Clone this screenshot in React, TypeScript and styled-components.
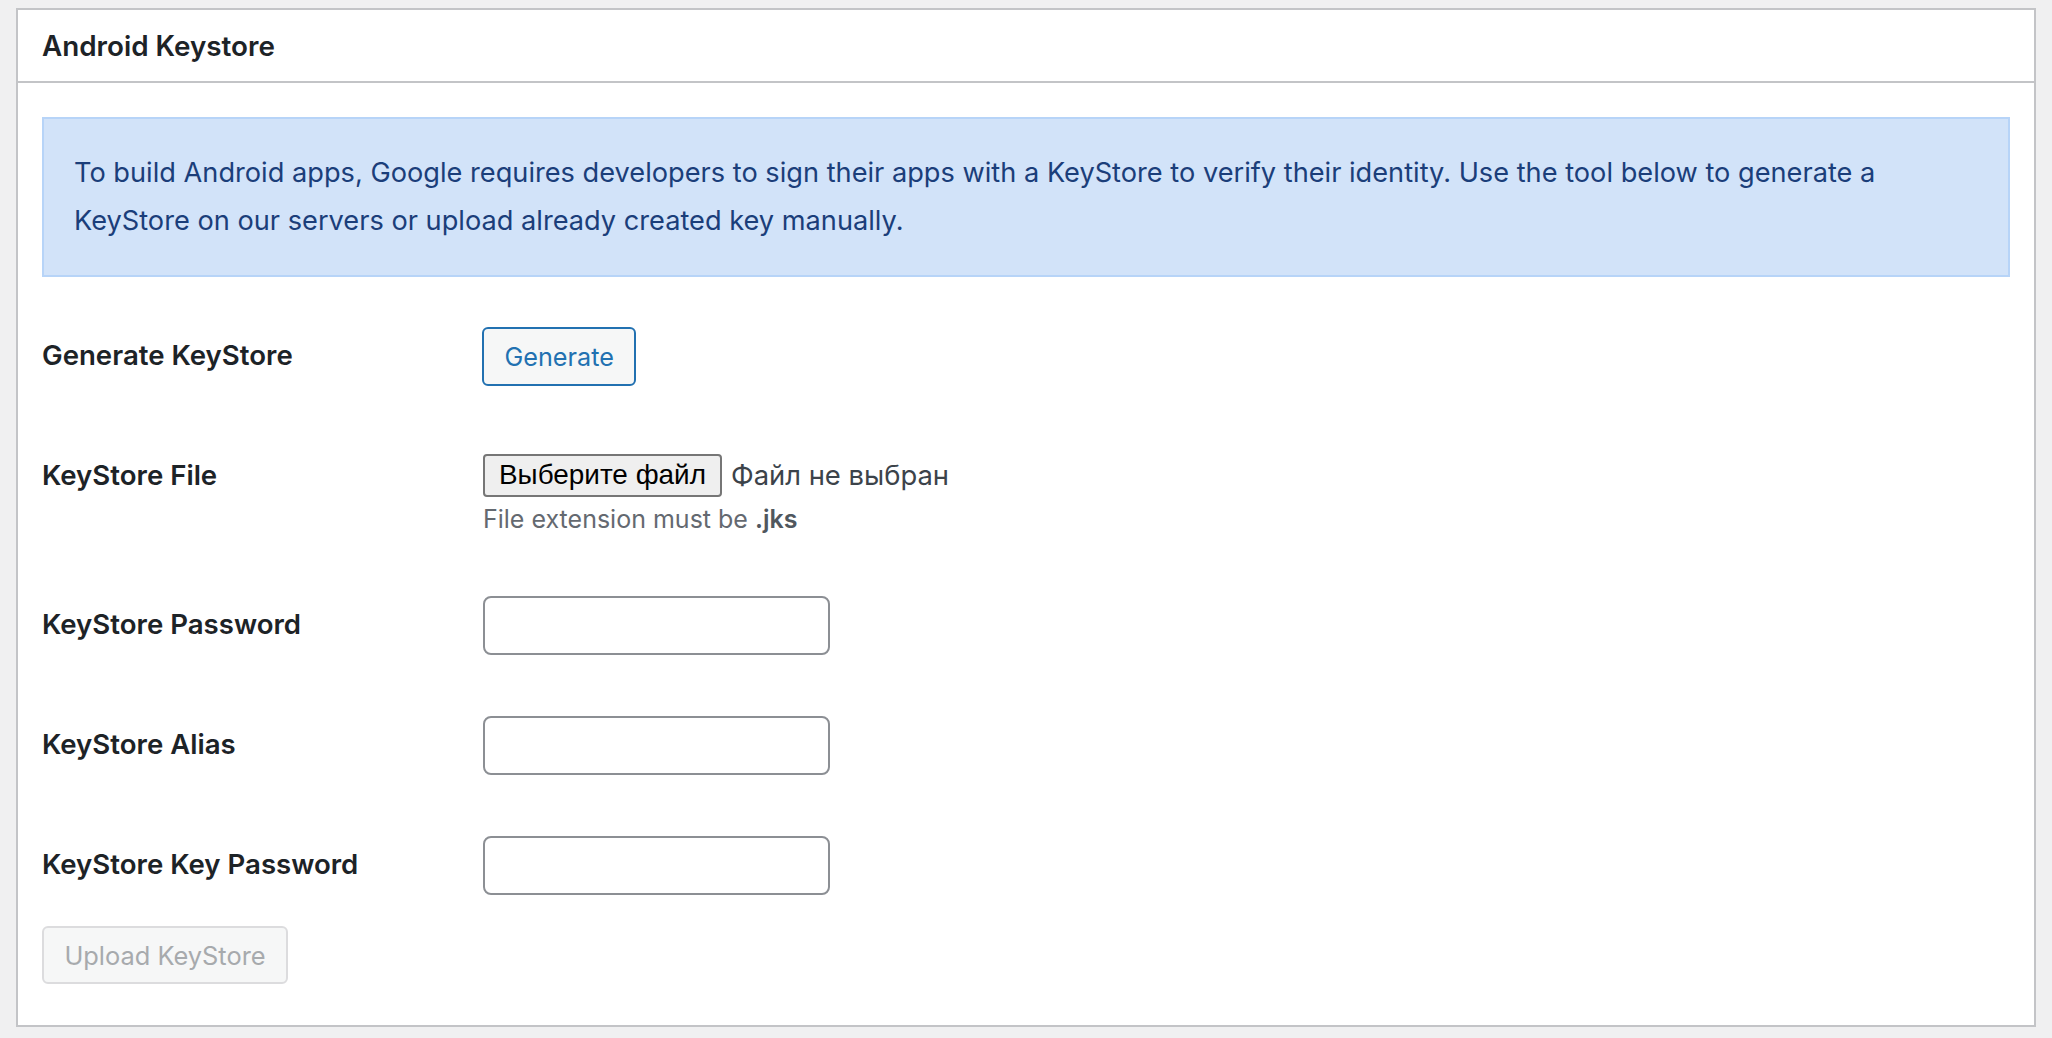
import React from "react";
import styled, { createGlobalStyle } from "styled-components";

const GlobalStyle = createGlobalStyle`
  * { box-sizing: border-box; }
  body {
    margin: 0;
    background: #f0f0f1;
    font-family: Inter, "Noto Sans", sans-serif;
    color: #1d2327;
  }
`;

const Page = styled.div`
  padding: 8px 16px 0 16px;
`;

const Panel = styled.section`
  background: #fff;
  border: 2px solid #c3c4c7;
`;

const PanelHeader = styled.div`
  height: 73px;
  border-bottom: 2px solid #c3c4c7;
  padding: 2px 24px 0;
  display: flex;
  align-items: center;
`;

const PanelTitle = styled.h2`
  margin: 0;
  font-size: 27.8px;
  font-weight: 600;
  line-height: 1;
  color: #1d2327;
`;

const PanelBody = styled.div`
  padding: 34px 24px 41px;
`;

const Notice = styled.div`
  background: #d2e3f9;
  border: 2px solid #b7d4f8;
  padding: 30px 30px;
  margin-bottom: 20px;
  color: #1b3e7a;
  font-size: 27.2px;
  line-height: 48px;
`;

const FormRow = styled.div`
  display: grid;
  grid-template-columns: 441px 1fr;
  min-height: 120px;
`;

const Label = styled.label`
  padding-top: 40px;
  font-size: 27.6px;
  font-weight: 600;
  line-height: 36px;
  color: #1d2327;
`;

const Field = styled.div`
  padding: 30px 0;
`;

const OutlineButton = styled.button`
  height: 59px;
  margin-left: -1px;
  padding: 0 20.5px;
  border: 2px solid #2271b1;
  border-radius: 6px;
  background: #f6f7f7;
  color: #2271b1;
  font-family: inherit;
  font-size: 25.2px;
`;

const FileLine = styled.div`
  height: 56px;
  display: flex;
  align-items: center;
  gap: 9px;
`;

const FileButton = styled.span`
  height: 43px;
  padding: 0 14px;
  display: inline-flex;
  align-items: center;
  border: 2px solid #767676;
  border-radius: 4px;
  background: #efefef;
  color: #000;
  font-family: "Liberation Sans", Arial, sans-serif;
  font-size: 27.9px;
`;

const FileStatus = styled.span`
  color: #3c434a;
  font-size: 27.4px;
`;

const Description = styled.p`
  margin: 0;
  color: #646970;
  font-size: 25px;
  line-height: 33px;
  b { color: #50575e; font-weight: 600; }
`;

const TextInput = styled.input`
  display: block;
  width: 347px;
  height: 59px;
  border: 2px solid #8c8f94;
  border-radius: 8px;
  background: #fff;
  font-family: inherit;
  font-size: 26px;
  padding: 0 14px;
`;

const DisabledButton = styled.button`
  display: block;
  width: 246px;
  height: 58px;
  padding: 0;
  border: 2px solid #dcdcde;
  border-radius: 6px;
  background: #f6f7f7;
  color: #a7aaad;
  font-family: inherit;
  font-size: 25.4px;
`;

const App = () => (
  <>
    <GlobalStyle />
    <Page>
      <Panel>
        <PanelHeader>
          <PanelTitle>Android Keystore</PanelTitle>
        </PanelHeader>
        <PanelBody>
          <Notice>
            To build Android apps, Google requires developers to sign their apps with a KeyStore to verify their
            identity. Use the tool below to generate a KeyStore on our servers or upload already created key
            manually.
          </Notice>
          <FormRow>
            <Label>Generate KeyStore</Label>
            <Field>
              <OutlineButton>Generate</OutlineButton>
            </Field>
          </FormRow>
          <FormRow>
            <Label>KeyStore File</Label>
            <Field>
              <FileLine>
                <FileButton>Выберите файл</FileButton>
                <FileStatus>Файл не выбран</FileStatus>
              </FileLine>
              <Description>
                File extension must be <b>.jks</b>
              </Description>
            </Field>
          </FormRow>
          <FormRow>
            <Label>KeyStore Password</Label>
            <Field>
              <TextInput type="password" />
            </Field>
          </FormRow>
          <FormRow>
            <Label>KeyStore Alias</Label>
            <Field>
              <TextInput type="text" />
            </Field>
          </FormRow>
          <FormRow>
            <Label>KeyStore Key Password</Label>
            <Field>
              <TextInput type="password" />
            </Field>
          </FormRow>
          <DisabledButton disabled>Upload KeyStore</DisabledButton>
        </PanelBody>
      </Panel>
    </Page>
  </>
);

export default App;
